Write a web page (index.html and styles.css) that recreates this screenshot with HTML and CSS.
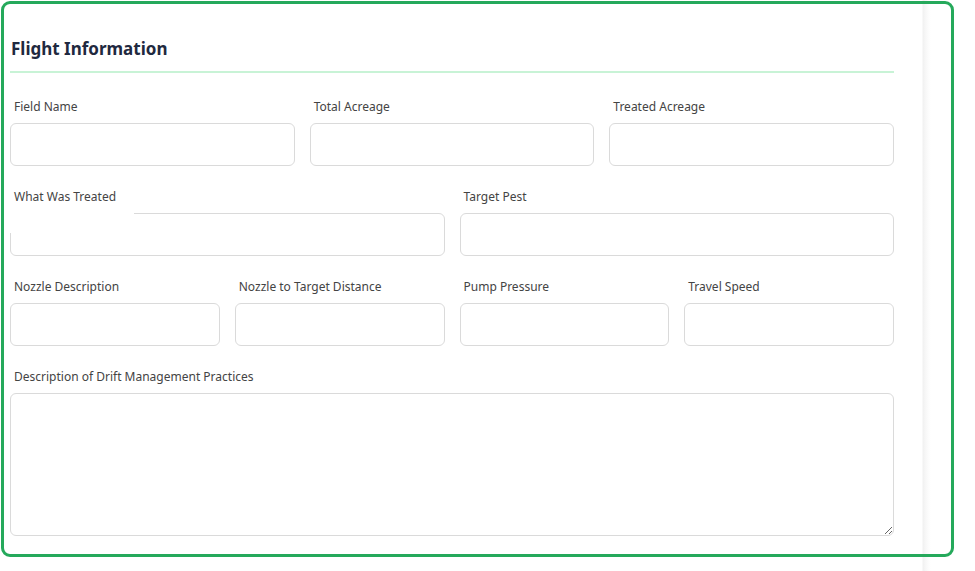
FILE: index.html
```html
<!DOCTYPE html>
<html>
<head>
<meta charset="utf-8">
<link rel="stylesheet" href="styles.css">
</head>
<body>
<div class="card">
  <h2 class="title">Flight Information</h2>
  <div class="rule"></div>
  <div class="row cols-3">
    <div class="field"><label>Field Name</label><div class="input"></div></div>
    <div class="field"><label>Total Acreage</label><div class="input"></div></div>
    <div class="field"><label>Treated Acreage</label><div class="input"></div></div>
  </div>
  <div class="row cols-2">
    <div class="field treated"><label>What Was Treated</label><div class="input"></div><span class="mask"></span></div>
    <div class="field"><label>Target Pest</label><div class="input"></div></div>
  </div>
  <div class="row cols-4">
    <div class="field"><label>Nozzle Description</label><div class="input"></div></div>
    <div class="field"><label>Nozzle to Target Distance</label><div class="input"></div></div>
    <div class="field"><label>Pump Pressure</label><div class="input"></div></div>
    <div class="field"><label>Travel Speed</label><div class="input"></div></div>
  </div>
  <div class="row">
    <div class="field"><label>Description of Drift Management Practices</label><textarea class="area"></textarea></div>
  </div>
</div>
</body>
</html>
```
FILE: styles.css
```css
html, body {
  margin: 0;
  padding: 0;
}
body {
  width: 975px;
  height: 571px;
  overflow: hidden;
  font-family: "Noto Sans", "Open Sans", sans-serif;
  background: linear-gradient(to right, #fff 0, #fff 922px, #f1f1f1 923px, #f8f8f8 926px, #fdfdfd 929px, #fff 931px, #fff 100%);
}
.card {
  box-sizing: border-box;
  margin: 1px 0 0 1px;
  width: 953px;
  height: 556px;
  border: 3px solid #25a95b;
  border-radius: 9px;
  padding: 32px 57px 0 6px;
}
.title {
  margin: 0;
  font-size: 17px;
  line-height: 26px;
  font-weight: 700;
  color: #1f2940;
  padding-left: 1px;
}
.rule {
  margin-top: 9px;
  height: 0;
  border-top: 2px solid #c8f3d6;
  margin-bottom: 25px;
}
.row {
  display: grid;
  column-gap: 15px;
  margin-bottom: 22px;
}
.cols-3 { grid-template-columns: repeat(3, 1fr); }
.cols-2 { grid-template-columns: repeat(2, 1fr); }
.cols-4 { grid-template-columns: repeat(4, 1fr); }
.field {
  display: flex;
  flex-direction: column;
  position: relative;
}
.field label {
  font-size: 12px;
  line-height: 17px;
  height: 17px;
  color: #444;
  margin: 0 0 8px 4px;
}
.input {
  box-sizing: border-box;
  height: 43px;
  border: 1px solid #dadada;
  border-radius: 6px;
  background: #fff;
}
.area {
  box-sizing: border-box;
  display: block;
  height: 143px;
  width: 100%;
  margin: 0;
  border: 1px solid #dadada;
  border-radius: 6px;
  background: #fff;
  resize: vertical;
  font: inherit;
}
.mask {
  position: absolute;
  left: -2px;
  top: 17px;
  width: 126px;
  height: 28px;
  background: #fff;
}
```
